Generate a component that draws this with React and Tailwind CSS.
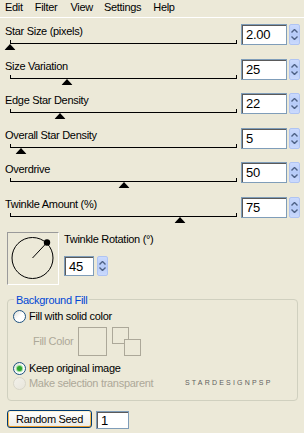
import React from "react";

const rows = [
  { label: "Star Size (pixels)", value: "2.00", pos: 0, h: "h-[35px]" },
  { label: "Size Variation", value: "25", pos: 25, h: "h-[34px]" },
  { label: "Edge Star Density", value: "22", pos: 22, h: "h-[35px]" },
  { label: "Overall Star Density", value: "5", pos: 5, h: "h-[34px]" },
  { label: "Overdrive", value: "50", pos: 50, h: "h-[35px]" },
  { label: "Twinkle Amount (%)", value: "75", pos: 75, h: "h-[35px]" },
];

function Spinner({ className }) {
  return (
    <div
      className={
        "flex flex-col items-center justify-between rounded-[2px] border border-[#AFC4F3] bg-gradient-to-b from-[#CBDAFD] via-[#B6CBF8] to-[#CBDAFD] py-[4px] " +
        className
      }
    >
      <svg width="7" height="4" viewBox="0 0 7 4">
        <path d="M0.5 3.5 L3.5 0.5 L6.5 3.5" fill="none" stroke="#4D6185" strokeWidth="1.4" />
      </svg>
      <svg width="7" height="4" viewBox="0 0 7 4">
        <path d="M0.5 0.5 L3.5 3.5 L6.5 0.5" fill="none" stroke="#4D6185" strokeWidth="1.4" />
      </svg>
    </div>
  );
}

function NumBox({ value, className }) {
  return (
    <div
      className={
        "flex items-center border border-[#7F9DB9] bg-white pl-[4px] text-[13px] leading-none text-black shadow-[inset_1px_1px_0_#5A5A5A] " +
        className
      }
    >
      {value}
    </div>
  );
}

function Radio({ checked, disabled }) {
  return (
    <div
      className={
        "flex h-[13px] w-[13px] shrink-0 items-center justify-center rounded-full border bg-gradient-to-br " +
        (disabled
          ? "border-[#D8D6CA] from-[#F2F1EA] to-[#E8E6DC]"
          : "border-[#1C5180] from-[#DCDCD4] via-white to-white")
      }
    >
      {checked && (
        <div className="h-[5px] w-[5px] rounded-full bg-[#2FA52F] shadow-[0_0_1px_1px_#8FD98F]" />
      )}
    </div>
  );
}

function SliderRow({ label, value, pos, h }) {
  return (
    <div className={"flex " + h}>
      <div className="w-[241px]">
        <div className="pl-[5px] leading-[14px]">{label}</div>
        <div className="relative mt-[5px] ml-[10px] h-px w-[227px] bg-black">
          <div className="absolute left-0 -top-[3px] h-[3px] w-px bg-black" />
          <div className="absolute right-0 -top-[3px] h-[3px] w-px bg-black" />
          <svg
            className="absolute top-[1px] -translate-x-1/2"
            style={{ left: `${pos}%` }}
            width="11"
            height="6"
            viewBox="0 0 11 6"
          >
            <polygon points="5.5,0 11,6 0,6" fill="#000" />
          </svg>
        </div>
      </div>
      <NumBox value={value} className="h-[21px] w-[46px]" />
      <Spinner className="ml-[2px] h-[21px] w-[11px]" />
    </div>
  );
}

export default function App() {
  return (
    <div
      className="h-[433px] w-[304px] overflow-hidden bg-[#ECE9D8] text-[11px] tracking-[-0.3px] text-black"
      style={{ fontFamily: '"Liberation Sans", Arial, sans-serif' }}
    >
      <div className="flex h-[18px] border-b border-white pl-[5px] leading-[14px]">
        <span>Edit</span>
        <span className="ml-[12px]">Filter</span>
        <span className="ml-[13px]">View</span>
        <span className="ml-[11px]">Settings</span>
        <span className="ml-[12px]">Help</span>
      </div>

      <div className="pt-[6px]">
        {rows.map((r) => (
          <SliderRow key={r.label} {...r} />
        ))}
      </div>

      <div className="ml-[7px] flex">
        <div className="h-[53px] w-[52px] border border-t-[#9A9A9A] border-l-[#9A9A9A] border-b-white border-r-white">
          <svg width="50" height="51" viewBox="0 0 50 51">
            <circle cx="24.5" cy="25" r="20.5" fill="none" stroke="#000" strokeWidth="1" />
            <line x1="24.5" y1="25" x2="39" y2="9.5" stroke="#000" strokeWidth="1" />
            <circle cx="39" cy="9.5" r="3.2" fill="#000" />
          </svg>
        </div>
        <div className="ml-[5px]">
          <div className="leading-[14px]">Twinkle Rotation (°)</div>
          <div className="mt-[10px] flex">
            <NumBox value="45" className="h-[20px] w-[30px]" />
            <Spinner className="ml-[3px] h-[20px] w-[11px]" />
          </div>
        </div>
      </div>

      <div className="relative ml-[7px] mt-[14px] h-[102px] w-[291px] rounded-[4px] border border-[#D0D0BF]">
        <div className="absolute -top-[7px] left-[6px] bg-[#ECE9D8] px-[2px] leading-[14px] text-[#0046D5]">
          Background Fill
        </div>
        <div className="mt-[9px] flex h-[14px] items-center pl-[5px]">
          <Radio />
          <span className="ml-[3px] leading-[14px]">Fill with solid color</span>
        </div>
        <div className="mt-[4px] flex items-center pl-[25px]">
          <span className="w-[45px] text-[#ACA899]">Fill Color</span>
          <div className="h-[29px] w-[29px] border border-[#ACA899]" />
          <div className="relative ml-[5px] h-[29px] w-[29px]">
            <div className="absolute left-0 top-0 h-[17px] w-[17px] border border-[#ACA899]" />
            <div className="absolute left-[12px] top-[12px] h-[17px] w-[17px] border border-[#ACA899] bg-[#ECE9D8]" />
          </div>
        </div>
        <div className="mt-[5px] flex h-[14px] items-center pl-[5px]">
          <Radio checked />
          <span className="ml-[3px] leading-[14px]">Keep original image</span>
        </div>
        <div className="mt-[1px] flex h-[14px] items-center pl-[5px]">
          <div className="flex w-[172px] items-center">
            <Radio disabled />
            <span className="ml-[3px] leading-[14px] text-[#ACA899]">Make selection transparent</span>
          </div>
          <span className="text-[7px] tracking-[2.2px] text-[#5F5F5F]">STARDESIGNPSP</span>
        </div>
      </div>

      <div className="ml-[7px] mt-[9px] flex items-start">
        <button className="h-[18px] w-[85px] rounded-[3px] border border-[#003C74] bg-gradient-to-b from-white to-[#ECEBE6] text-[11px] leading-none tracking-[-0.3px] text-black shadow-[inset_0_1px_0_#FFF0CF,inset_0_-1px_0_#E5972A,inset_1px_0_0_#F8B94A,inset_-1px_0_0_#F8B94A]">
          Random Seed
        </button>
        <NumBox value="1" className="ml-[4px] mt-[1px] h-[18px] w-[33px]" />
      </div>
    </div>
  );
}
